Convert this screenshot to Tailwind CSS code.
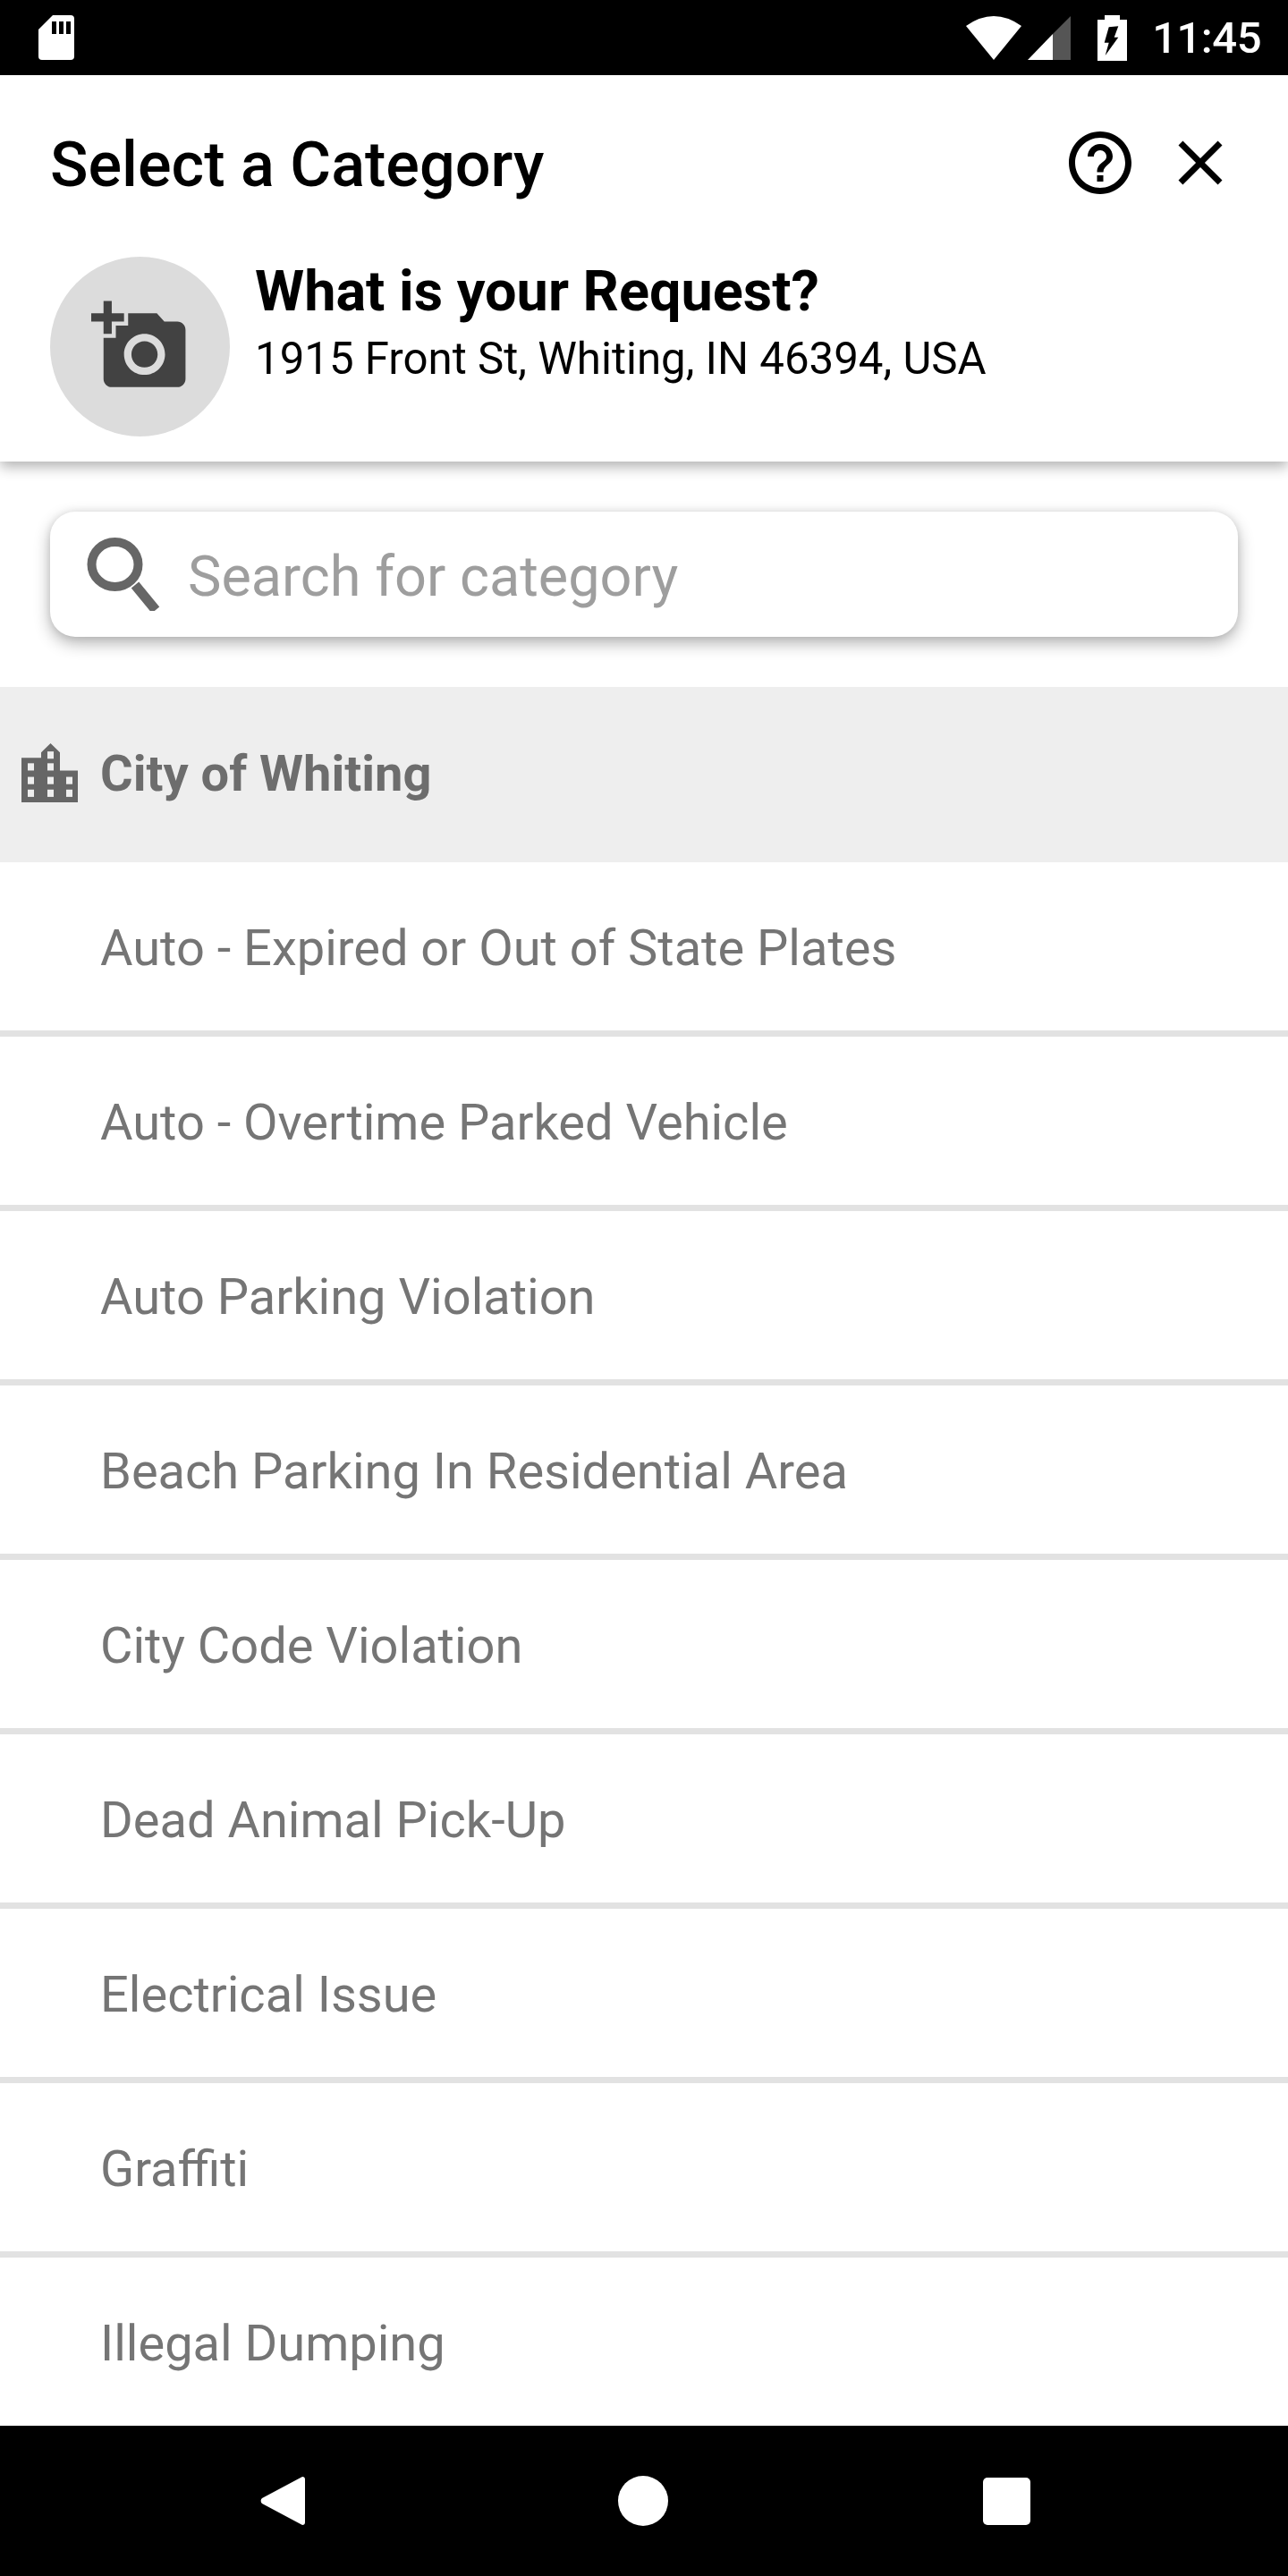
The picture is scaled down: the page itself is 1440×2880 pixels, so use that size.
<!DOCTYPE html>
<html lang="en">
<head>
  <meta charset="UTF-8">
  <title>Select a Category</title>
  <script src="https://cdn.jsdelivr.net/npm/@tailwindcss/browser@4"></script>
</head>
<body class="bg-white font-['Roboto',sans-serif] w-[1440px] h-[2880px] overflow-hidden flex flex-col">
  <!-- status bar -->
  <div class="h-[84px] shrink-0 bg-black flex items-center text-white">
    <svg class="ml-[43px] mt-[-1px]" width="40" height="50" viewBox="0 0 40 50">
      <path d="M16 0H36a4 4 0 0 1 4 4V46a4 4 0 0 1-4 4H4a4 4 0 0 1-4-4V16z" fill="#fff"/>
      <path d="M15 7h5v14h-5zM23 7h5v14h-5zM31 7h5v14h-5z" fill="#000"/>
    </svg>
    <div class="ml-auto flex items-center">
      <svg width="62" height="49" viewBox="0 0 62 49"><path d="M31 49L0 11Q31 -11 62 11z" fill="#fff"/></svg>
      <svg class="ml-[7px]" width="48" height="49" viewBox="0 0 48 49">
        <path d="M0 49L28 20V49z" fill="#fff"/>
        <path d="M28 20L48 0V49H28z" fill="#555"/>
      </svg>
      <svg class="ml-[30px]" width="33" height="51" viewBox="0 0 33 51">
        <path d="M8 0h17v5h8v46H0V5h8z" fill="#fff"/>
        <path d="M12.700 13.300L23.300 12.300L18.700 24.700H23.300L8.700 45L12.700 30.700H7.700z" fill="#000"/>
      </svg>
      <span class="ml-[28px] mr-[30px] text-[49px] leading-none font-medium tracking-[-0.5px]">11:45</span>
    </div>
  </div>

  <main class="flex-1 overflow-hidden flex flex-col">
    <!-- header -->
    <div class="h-[432px] shrink-0 px-[56px] shadow-[0_6px_14px_rgba(0,0,0,0.3)] relative">
      <div class="flex items-center justify-between h-[84px] mt-[56px]">
        <h1 class="text-[70.200px] leading-none font-medium text-black pt-[4px]">Select a Category</h1>
        <div class="flex items-center gap-[28px]">
          <svg width="84" height="84" viewBox="0 0 24 24" fill="#000"><path d="M11 18h2v-2h-2v2zm1-16C6.480 2 2 6.480 2 12s4.480 10 10 10 10-4.480 10-10S17.520 2 12 2zm0 18c-4.410 0-8-3.590-8-8s3.590-8 8-8 8 3.590 8 8-3.590 8-8 8zm0-14c-2.210 0-4 1.790-4 4h2c0-1.100.9-2 2-2s2 .9 2 2c0 2-3 1.750-3 5h2c0-2.250 3-2.500 3-5 0-2.210-1.790-4-4-4z"/></svg>
          <svg width="84" height="84" viewBox="0 0 24 24" fill="#000"><path d="M19 6.410L17.590 5 12 10.590 6.410 5 5 6.410 10.590 12 5 17.590 6.410 19 12 13.410 17.590 19 19 17.590 13.410 12z"/></svg>
        </div>
      </div>
      <div class="flex items-start mt-[63px]">
        <div class="w-[201px] h-[201px] rounded-full bg-[#dcdcdc] flex items-center justify-center shrink-0">
          <svg class="mt-[-2px]" width="110" height="110" viewBox="0 0 24 24" fill="#424242"><path fill-rule="evenodd" d="M3 4V1h2v3h3v2H5v3H3V6H0V4h3zm3 6V7h3V4h7l1.830 2H21c1.100 0 2 .9 2 2v12c0 1.100-.9 2-2 2H5c-1.100 0-2-.9-2-2V10h3zm7 9c2.760 0 5-2.240 5-5s-2.240-5-5-5-5 2.240-5 5 2.240 5 5 5zm-3.200-5c0 1.770 1.430 3.200 3.200 3.200s3.200-1.430 3.200-3.200-1.430-3.200-3.200-3.200-3.200 1.430-3.200 3.200z"/></svg>
        </div>
        <div class="ml-[28px] pt-[6px]">
          <div class="text-[63px] leading-[66px] font-bold text-black">What is your Request?</div>
          <div class="text-[49.200px] leading-[60px] mt-[12px] text-black">1915 Front St, Whiting, IN 46394, USA</div>
        </div>
      </div>
    </div>

    <!-- search -->
    <div class="h-[252px] shrink-0 px-[56px] pt-[56px]">
      <div class="h-[140px] rounded-[28px] bg-white shadow-[0_7px_18px_rgba(0,0,0,0.3),0_0_8px_rgba(0,0,0,0.08)] flex items-center">
        <svg class="ml-[41px]" width="82" height="82" viewBox="0 0 82 82">
          <ellipse cx="31.500" cy="30" rx="26" ry="25" fill="none" stroke="#666" stroke-width="10"/>
          <path d="M54 53L77 81" stroke="#666" stroke-width="11" fill="none"/>
        </svg>
        <span class="ml-[31px] pt-[4px] text-[63px] leading-none text-[#9e9e9e]">Search for category</span>
      </div>
    </div>

    <!-- category header -->
    <div class="h-[196px] shrink-0 bg-[#eeeeee] flex items-center">
      <svg class="ml-[24px] mt-[-4px]" width="63" height="66" viewBox="0 0 63 65" preserveAspectRatio="none">
        <path d="M0 65V16H22V10L32.500 0L43 10V30H63V65z" fill="#666"/>
        <g fill="#eee">
          <rect x="29" y="9" width="7" height="8"/>
          <rect x="7" y="22" width="7" height="8"/><rect x="29" y="22" width="7" height="8"/>
          <rect x="7" y="37" width="7" height="8"/><rect x="29" y="37" width="7" height="8"/><rect x="50" y="37" width="7" height="8"/>
          <rect x="7" y="51" width="7" height="8"/><rect x="29" y="51" width="7" height="8"/><rect x="50" y="51" width="7" height="8"/>
        </g>
      </svg>
      <span class="ml-[25px] mb-[2px] text-[56px] leading-none font-bold text-[#6d6d6d]">City of Whiting</span>
    </div>

    <!-- rows -->
    <div class="flex flex-col">
      <div class="h-[195px] shrink-0 border-b-[7px] border-[#e2e2e2] flex items-center pl-[112px] pt-[3px] text-[56px] leading-none text-[#757575]">Auto - Expired or Out of State Plates</div>
      <div class="h-[195px] shrink-0 border-b-[7px] border-[#e2e2e2] flex items-center pl-[112px] pt-[3px] text-[56px] leading-none text-[#757575]">Auto - Overtime Parked Vehicle</div>
      <div class="h-[195px] shrink-0 border-b-[7px] border-[#e2e2e2] flex items-center pl-[112px] pt-[3px] text-[56px] leading-none text-[#757575]">Auto Parking Violation</div>
      <div class="h-[195px] shrink-0 border-b-[7px] border-[#e2e2e2] flex items-center pl-[112px] pt-[3px] text-[56px] leading-none text-[#757575]">Beach Parking In Residential Area</div>
      <div class="h-[195px] shrink-0 border-b-[7px] border-[#e2e2e2] flex items-center pl-[112px] pt-[3px] text-[56px] leading-none text-[#757575]">City Code Violation</div>
      <div class="h-[195px] shrink-0 border-b-[7px] border-[#e2e2e2] flex items-center pl-[112px] pt-[3px] text-[56px] leading-none text-[#757575]">Dead Animal Pick-Up</div>
      <div class="h-[195px] shrink-0 border-b-[7px] border-[#e2e2e2] flex items-center pl-[112px] pt-[3px] text-[56px] leading-none text-[#757575]">Electrical Issue</div>
      <div class="h-[195px] shrink-0 border-b-[7px] border-[#e2e2e2] flex items-center pl-[112px] pt-[3px] text-[56px] leading-none text-[#757575]">Graffiti</div>
      <div class="h-[195px] shrink-0 border-b-[7px] border-[#e2e2e2] flex items-center pl-[112px] pt-[3px] text-[56px] leading-none text-[#757575]">Illegal Dumping</div>
    </div>
  </main>

  <!-- nav bar -->
  <div class="h-[168px] shrink-0 bg-black flex items-center">
    <svg class="ml-[291px]" width="50" height="56" viewBox="0 0 50 56"><path d="M47 1a3 3 0 0 1 3 3V52a3 3 0 0 1-3 3L2 31a4 4 0 0 1 0-6z" fill="#fff"/></svg>
    <div class="ml-[350px] w-[56px] h-[56px] rounded-full bg-white"></div>
    <div class="ml-[352px] w-[53px] h-[53px] rounded-[5px] bg-white"></div>
  </div>
</body>
</html>
